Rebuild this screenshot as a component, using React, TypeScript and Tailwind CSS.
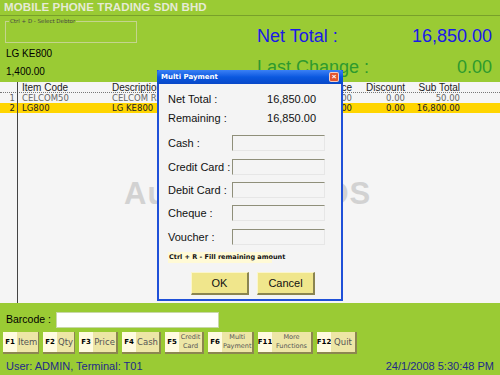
const FKEYS = [
  { key: "F1", label: "Item", w: "w-[36px]" },
  { key: "F2", label: "Qty", w: "w-[32px]" },
  { key: "F3", label: "Price", w: "w-[39px]" },
  { key: "F4", label: "Cash", w: "w-[39px]" },
  { key: "F5", label: "Credit Card", w: "w-[39px]" },
  { key: "F6", label: "Multi Payment", w: "w-[46px]" },
  { key: "F11", label: "More Functions", w: "w-[55px]" },
  { key: "F12", label: "Quit", w: "w-[40px]" },
];

const ROWS = [
  { no: "1", code: "CELCOM50", desc: "CELCOM RELOAD 50", price: "0.00", disc: "0.00", sub: "50.00", active: false },
  { no: "2", code: "LG800", desc: "LG KE800", price: "0.00", disc: "0.00", sub: "16,800.00", active: true },
];

const PAYMENTS = [
  { label: "Cash :", mt: "mt-[10px]" },
  { label: "Credit Card :", mt: "mt-[8px]" },
  { label: "Debit Card :", mt: "mt-[7px]" },
  { label: "Cheque :", mt: "mt-[7px]" },
  { label: "Voucher :", mt: "mt-[8px]" },
];

const cols = "grid grid-cols-[17px_93px_190px_55px_53px_55px_1fr]";

const MultiPayment = () => {
  return (
    <div className="absolute left-[157px] top-[70px] w-[186px] h-[231px] flex flex-col bg-[#f4f4f4] border-x-2 border-b-2 border-[#1f50d8]">
      <div className="h-[14px] -mx-[2px] flex items-center justify-between px-[4px] bg-gradient-to-b from-[#3a80f5] via-[#0a58e0] to-[#0848c8] rounded-t-[3px]">
        <span className="text-white font-bold text-[7px] font-['DejaVu_Sans',sans-serif]">Multi Payment</span>
        <div className="w-[10px] h-[10px] rounded-[2px] bg-[#e2562e] border border-white/70 flex items-center justify-center text-white text-[8px] leading-none font-bold">
          ×
        </div>
      </div>
      <div className="flex flex-col px-[9px] text-[11px] text-[#111]">
        <div className="mt-[8px] h-[14px] flex items-center justify-between pr-[16px]">
          <span>Net Total :</span>
          <span>16,850.00</span>
        </div>
        <div className="mt-[5px] h-[14px] flex items-center justify-between pr-[16px]">
          <span>Remaining :</span>
          <span>16,850.00</span>
        </div>
        {PAYMENTS.map((p) => (
          <div key={p.label} className={`${p.mt} h-[16px] flex items-center`}>
            <span className="w-[64px] shrink-0 whitespace-nowrap leading-[13px]">{p.label}</span>
            <div className="w-[93px] h-[16px] border-t border-l border-[#8f8f7a] border-r border-b border-r-[#e6e6e6] border-b-[#e6e6e6]" />
          </div>
        ))}
        <div className="mt-[7px] h-[11px] w-[104px] bg-[#fffad6] flex items-center px-[1px] text-[6.5px] font-bold font-['DejaVu_Sans',sans-serif] whitespace-nowrap">
          Ctrl + R - Fill remaining amount
        </div>
        <div className="mt-[9px] flex gap-[8px] pl-[23px]">
          <button className="w-[58px] h-[23px] bg-[#f0e68c] border-t border-l border-[#fbf6cc] border-r-2 border-b-2 border-r-[#8a8450] border-b-[#8a8450] text-[11px]">
            OK
          </button>
          <button className="w-[58px] h-[23px] bg-[#f0e68c] border-t border-l border-[#fbf6cc] border-r-2 border-b-2 border-r-[#8a8450] border-b-[#8a8450] text-[11px]">
            Cancel
          </button>
        </div>
      </div>
    </div>
  );
};

const App = () => {
  return (
    <div className="relative w-[500px] h-[375px] overflow-hidden bg-[#9acb34] font-['Liberation_Sans',Arial,sans-serif] text-black">
      <div className="h-[16px] border-b border-[#78a02a] flex items-center pl-[4px]">
        <span className="text-[11.5px] font-bold text-[#e6ead6] tracking-[0.1px]">MOBILE PHONE TRADING SDN BHD</span>
      </div>

      <div className="h-[66px] flex justify-between">
        <div className="flex flex-col pl-[5px]">
          <fieldset className="mt-[1px] w-[132px] h-[26px] border border-[#c4d48e] px-[3px]">
            <legend className="text-[5.5px] text-[#444] px-[1px] font-['DejaVu_Sans',sans-serif]">Ctrl + D - Select Debtor</legend>
          </fieldset>
          <div className="mt-[2px] pl-[1px] text-[10px] leading-[18px]">LG KE800</div>
          <div className="pl-[1px] text-[10px] leading-[17px]">1,400.00</div>
        </div>
        <div className="w-[243px] pr-[8px] pt-[9px] flex flex-col">
          <div className="flex justify-between text-[18px] leading-[22px] text-[#1a1ae6]">
            <span>Net Total :</span>
            <span>16,850.00</span>
          </div>
          <div className="mt-[9px] flex justify-between text-[18px] leading-[22px] text-[#2e9a2e]">
            <span>Last Change :</span>
            <span>0.00</span>
          </div>
        </div>
      </div>

      <div className="relative h-[221px] bg-[#f5f5f5]">
        <div className="absolute left-[17px] top-0 bottom-0 w-px bg-[#444]" />
        <div className={`${cols} h-[11px] items-center text-[10px] leading-[11px] text-[#222] border-b border-dotted border-[#777]`}>
          <div />
          <div className="pl-[5px]">Item Code</div>
          <div className="pl-[2px]">Description</div>
          <div className="text-right pr-[3px]">Price</div>
          <div className="text-right pr-[3px]">Discount</div>
          <div className="text-right pr-[3px]">Sub Total</div>
          <div />
        </div>
        {ROWS.map((r) => (
          <div
            key={r.no}
            className={`${cols} h-[10px] items-center text-[8.5px] leading-[10px] font-['DejaVu_Sans',sans-serif] ${r.active ? "bg-[#ffd500] text-[#222]" : "text-[#666]"}`}
          >
            <div className="text-right pr-[2px]">{r.no}</div>
            <div className="pl-[5px]">{r.code}</div>
            <div className="pl-[2px]">{r.desc}</div>
            <div className="text-right pr-[3px]">{r.price}</div>
            <div className="text-right pr-[3px]">{r.disc}</div>
            <div className="text-right pr-[3px]">{r.sub}</div>
            <div />
          </div>
        ))}
        <div className="absolute left-[124px] top-[89px] text-[31px] font-bold text-[#d2d2d2] tracking-[1px]">
          AutoCount POS
        </div>
      </div>

      <div className="flex flex-col">
        <div className="mt-[9px] h-[16px] flex items-center pl-[6px] gap-[5px]">
          <span className="text-[10.5px]">Barcode :</span>
          <div className="w-[163px] h-[16px] bg-white border border-[#c8d8a8]" />
        </div>
        <div className="mt-[4px] flex gap-[4px] pl-[3px]">
          {FKEYS.map((f) => (
            <div
              key={f.key}
              className={`${f.w} h-[22px] flex border-r-2 border-b-2 border-[#8c8650]`}
            >
              <div className="w-[14px] shrink-0 bg-[#fffbe0] flex items-center justify-center text-[7px] font-bold font-['DejaVu_Sans',sans-serif]">
                {f.key}
              </div>
              <div className="flex-1 bg-[#ede6a6] flex items-center justify-center text-center leading-[9px] text-[#555] font-['DejaVu_Sans',sans-serif] text-[6.5px] px-[1px]">
                {f.label.includes(" ") ? (
                  <span>{f.label}</span>
                ) : (
                  <span className="text-[8.5px]">{f.label}</span>
                )}
              </div>
            </div>
          ))}
        </div>
        <div className="mt-[3px] h-[18px] flex items-center justify-between px-[6px] text-[11px] text-[#1e2a8a]">
          <span>User: ADMIN, Terminal: T01</span>
          <span>24/1/2008 5:30:48 PM</span>
        </div>
      </div>

      <MultiPayment />
    </div>
  );
};

export default App;
